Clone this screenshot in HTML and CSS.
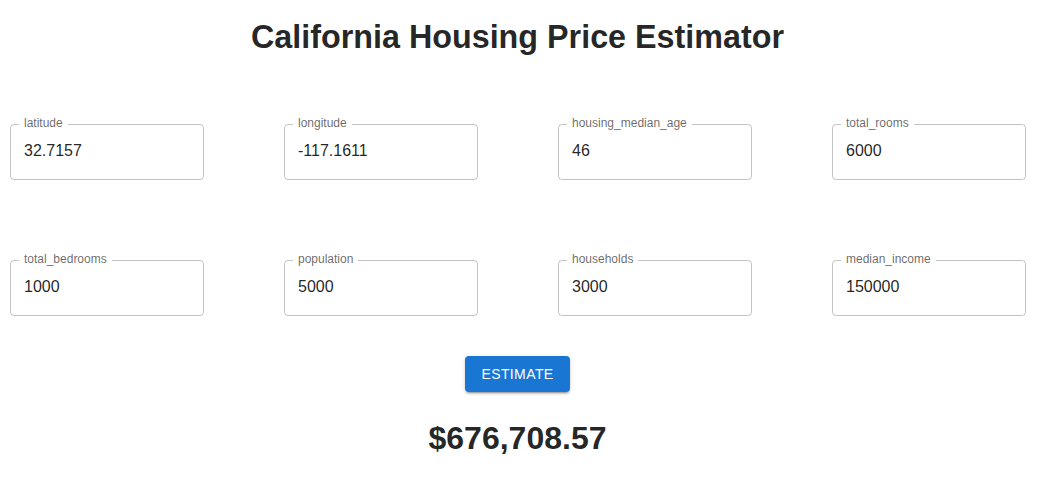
FILE: index.html
```html
<!DOCTYPE html>
<html lang="en">
<head>
<meta charset="utf-8">
<title>California Housing Price Estimator</title>
<link rel="stylesheet" href="styles.css">
</head>
<body>
<main class="page">
  <h1 class="title">California Housing Price Estimator</h1>
  <form class="fields">
    <fieldset class="field"><legend class="field-label">latitude</legend><input class="field-input" type="text" value="32.7157"></fieldset>
    <fieldset class="field"><legend class="field-label">longitude</legend><input class="field-input" type="text" value="-117.1611"></fieldset>
    <fieldset class="field"><legend class="field-label">housing_median_age</legend><input class="field-input" type="text" value="46"></fieldset>
    <fieldset class="field"><legend class="field-label">total_rooms</legend><input class="field-input" type="text" value="6000"></fieldset>
    <fieldset class="field"><legend class="field-label">total_bedrooms</legend><input class="field-input" type="text" value="1000"></fieldset>
    <fieldset class="field"><legend class="field-label">population</legend><input class="field-input" type="text" value="5000"></fieldset>
    <fieldset class="field"><legend class="field-label">households</legend><input class="field-input" type="text" value="3000"></fieldset>
    <fieldset class="field"><legend class="field-label">median_income</legend><input class="field-input" type="text" value="150000"></fieldset>
  </form>
  <div class="actions">
    <button class="btn" type="button">Estimate</button>
  </div>
  <div class="result">$676,708.57</div>
</main>
</body>
</html>
```

FILE: styles.css
```css
html, body {
  margin: 0;
  padding: 0;
  background: #ffffff;
}

body {
  font-family: "Liberation Sans", Helvetica, Arial, sans-serif;
  color: rgba(0, 0, 0, 0.87);
}

.page {
  width: 1035px;
  display: flex;
  flex-direction: column;
}

.title {
  margin: 19px 0 0;
  font-size: 32.3px;
  line-height: 37px;
  font-weight: 700;
  text-align: center;
}

.fields {
  margin: 61px 0 0;
  padding: 0 0 0 10px;
  display: grid;
  grid-template-columns: repeat(4, 194px);
  column-gap: 80px;
  row-gap: 73px;
}

.field {
  box-sizing: border-box;
  width: 194px;
  min-width: 0;
  margin: 0;
  padding: 0 8px;
  border: 1px solid rgba(0, 0, 0, 0.23);
  border-radius: 4px;
}

.field-label {
  padding: 0 5px 2px;
  font-size: 12px;
  line-height: 12px;
  color: rgba(0, 0, 0, 0.6);
}

.field-input {
  display: block;
  box-sizing: border-box;
  width: 100%;
  margin: 0;
  padding: 8px 5px 17px;
  border: 0;
  outline: none;
  background: transparent;
  font-family: inherit;
  font-size: 16px;
  line-height: 23px;
  height: 48px;
  color: rgba(0, 0, 0, 0.87);
}

.actions {
  margin-top: 40px;
  display: flex;
  justify-content: center;
}

.btn {
  padding: 6px 16px;
  border: 0;
  border-radius: 4px;
  background: #1976d2;
  color: #ffffff;
  font-family: inherit;
  font-size: 14px;
  line-height: 24px;
  letter-spacing: 0.4px;
  text-transform: uppercase;
  box-shadow: 0 3px 1px -2px rgba(0, 0, 0, 0.2), 0 2px 2px 0 rgba(0, 0, 0, 0.14), 0 1px 5px 0 rgba(0, 0, 0, 0.12);
  cursor: pointer;
}

.result {
  margin-top: 28px;
  font-size: 32px;
  line-height: 37px;
  font-weight: 700;
  text-align: center;
}
```
